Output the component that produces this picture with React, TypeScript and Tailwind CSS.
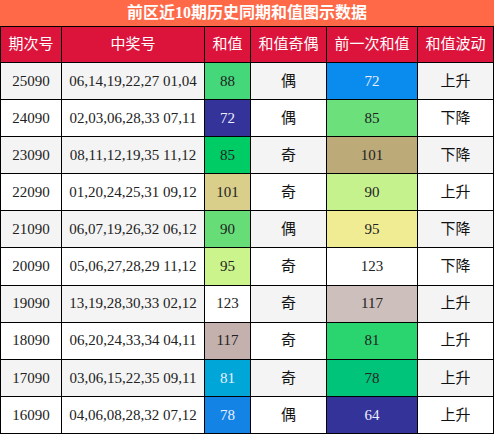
const rows = [
  { id: "25090", nums: "06,14,19,22,27 01,04", sum: "88", sumBg: "bg-[#44d87a]", sumLight: false, parity: "偶", prev: "72", prevBg: "bg-[#0a8cee]", prevLight: true, trend: "上升" },
  { id: "24090", nums: "02,03,06,28,33 07,11", sum: "72", sumBg: "bg-[#333399]", sumLight: true, parity: "偶", prev: "85", prevBg: "bg-[#6be07b]", prevLight: false, trend: "下降" },
  { id: "23090", nums: "08,11,12,19,35 11,12", sum: "85", sumBg: "bg-[#00cc66]", sumLight: false, parity: "奇", prev: "101", prevBg: "bg-[#bcaa78]", prevLight: false, trend: "下降" },
  { id: "22090", nums: "01,20,24,25,31 09,12", sum: "101", sumBg: "bg-[#d9ce8a]", sumLight: false, parity: "奇", prev: "90", prevBg: "bg-[#c6f28e]", prevLight: false, trend: "上升" },
  { id: "21090", nums: "06,07,19,26,32 06,12", sum: "90", sumBg: "bg-[#66dd77]", sumLight: false, parity: "偶", prev: "95", prevBg: "bg-[#f0ec94]", prevLight: false, trend: "下降" },
  { id: "20090", nums: "05,06,27,28,29 11,12", sum: "95", sumBg: "bg-[#ccf48c]", sumLight: false, parity: "奇", prev: "123", prevBg: "bg-white", prevLight: false, trend: "下降" },
  { id: "19090", nums: "13,19,28,30,33 02,12", sum: "123", sumBg: "bg-white", sumLight: false, parity: "奇", prev: "117", prevBg: "bg-[#cdbfbb]", prevLight: false, trend: "上升" },
  { id: "18090", nums: "06,20,24,33,34 04,11", sum: "117", sumBg: "bg-[#c4b0ac]", sumLight: false, parity: "奇", prev: "81", prevBg: "bg-[#2ad46e]", prevLight: false, trend: "上升" },
  { id: "17090", nums: "03,06,15,22,35 09,11", sum: "81", sumBg: "bg-[#00a6d8]", sumLight: true, parity: "奇", prev: "78", prevBg: "bg-[#00c47a]", prevLight: false, trend: "上升" },
  { id: "16090", nums: "04,06,08,28,32 07,12", sum: "78", sumBg: "bg-[#1384e6]", sumLight: true, parity: "偶", prev: "64", prevBg: "bg-[#333399]", prevLight: true, trend: "上升" },
];

const headers = ["期次号", "中奖号", "和值", "和值奇偶", "前一次和值", "和值波动"];

export default function App() {
  return (
    <div className="w-[494px] h-[434px] bg-black flex flex-col font-['Liberation_Serif','Noto_Sans_CJK_SC',serif] text-[15px]">
      <div className="h-[26px] shrink-0 bg-[#ff6947] text-white font-bold text-[16px] flex items-center justify-center">
        前区近10期历史同期和值图示数据
      </div>
      <div className="flex-1 grid grid-cols-[60px_142px_45px_75px_90px_75px] grid-rows-[35px_repeat(10,1fr)] gap-px p-px">
        {headers.map((h) => (
          <div key={h} className="bg-[#dc143c] text-white flex items-center justify-center">
            {h}
          </div>
        ))}
        {rows.map((r, i) => {
          const base = i % 2 === 0 ? "bg-[#f4f4f4]" : "bg-white";
          return [
            <div key={r.id + "a"} className={`${base} text-[#222] flex items-center justify-center`}>{r.id}</div>,
            <div key={r.id + "b"} className={`${base} text-[#222] flex items-center justify-center`}>{r.nums}</div>,
            <div key={r.id + "c"} className={`${r.sumBg} ${r.sumLight ? "text-[#eeeeff]" : "text-[#222]"} flex items-center justify-center`}>{r.sum}</div>,
            <div key={r.id + "d"} className={`${base} text-[#111] flex items-center justify-center`}>{r.parity}</div>,
            <div key={r.id + "e"} className={`${r.prevBg} ${r.prevLight ? "text-[#eeeeff]" : "text-[#222]"} flex items-center justify-center`}>{r.prev}</div>,
            <div key={r.id + "f"} className={`${base} text-[#111] flex items-center justify-center`}>{r.trend}</div>,
          ];
        })}
      </div>
    </div>
  );
}
